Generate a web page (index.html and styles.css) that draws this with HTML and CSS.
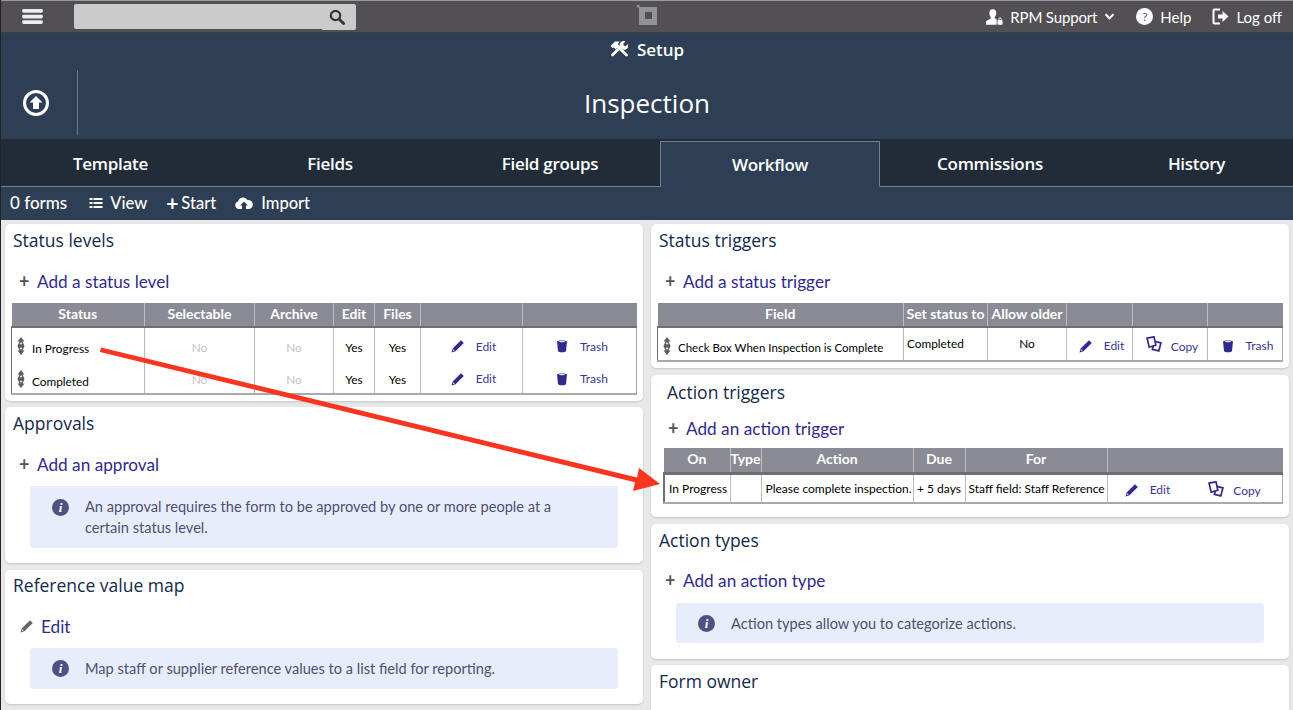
FILE: index.html
```html
<!DOCTYPE html>
<html lang="en">
<head>
    <meta charset="UTF-8">
    <title>Inspection - Workflow</title>
    <link rel="stylesheet" href="styles.css">
</head>
<body>
    <!-- Top bar -->
    <div class="topbar">
        <svg class="menu-icon" viewBox="0 0 22 16"><rect y="0" width="22" height="4" rx="1.5"/><rect y="6" width="22" height="4" rx="1.5"/><rect y="12" width="22" height="4" rx="1.5"/></svg>
        <div class="search">
            <div class="search-input"></div>
            <div class="search-btn">
                <svg viewBox="0 0 16 16"><circle cx="6.5" cy="6.5" r="4.7" fill="none" stroke="#333" stroke-width="2.2"/><path d="M10 10l4.6 4.6" stroke="#333" stroke-width="2.8" stroke-linecap="round"/></svg>
            </div>
        </div>
        <svg class="logo" viewBox="0 0 20 20"><rect x="2" y="2" width="18" height="18" fill="#939296"/><rect x="0" y="0" width="2.500" height="2.500" fill="#939296"/><rect x="8" y="7" width="7" height="7" fill="#4f4e52"/></svg>
        <div class="top-links">
            <a class="top-link link-user">
                <svg class="ic-user" viewBox="0 0 20 18"><path d="M8 0c3 0 4 2 4 4.500 0 2-1 3.500-1.800 4.500v1.500c1 .4 1.800.8 2.300 1.100V18H0v-3c0-2 3.500-3 5.500-4V9C4.700 8 4 6.500 4 4.500 4 2 5 0 8 0z" fill="#fff"/><rect x="13.500" y="12.500" width="6" height="5.500" rx="1" fill="#fff"/><path d="M15 13v-1.500a1.500 1.500 0 013 0V13" fill="none" stroke="#fff" stroke-width="1"/></svg>
                RPM Support
                <svg class="ic-chev" viewBox="0 0 12 8"><path d="M1.500 1.500L6 6l4.500-4.500" fill="none" stroke="#fff" stroke-width="2.400"/></svg>
            </a>
            <a class="top-link">
                <span class="ic-help">?</span>
                Help
            </a>
            <a class="top-link">
                <svg class="ic-logoff" viewBox="0 0 17 17"><path d="M8 1.500H2.500a1 1 0 00-1 1v12a1 1 0 001 1H8" fill="none" stroke="#fff" stroke-width="2"/><path d="M6 6.500h4.500V3l6 5.500-6 5.500v-3.500H6z" fill="#fff"/></svg>
                Log off
            </a>
        </div>
    </div>

    <!-- Header -->
    <header class="header">
        <div class="setup">
            <svg viewBox="0 0 18 16"><path d="M6 4l10.500 10" stroke="#fff" stroke-width="2.800" stroke-linecap="round"/><path d="M0.500 5L5 0.500h4.500L8 3l1 2-3.500 3.500-1.500-2-1.500 0.500z" fill="#fff"/><path d="M2.500 14l8.500-8.500" stroke="#fff" stroke-width="2.800" stroke-linecap="round"/><path d="M10.500 6.500a4 4 0 015-6l-2.300 2.300.6 1.800 1.800.6L17.900 2.900a4 4 0 01-5.400 5.400z" fill="#fff"/></svg>
            Setup
        </div>
        <div class="title-row">
            <div class="back">
                <svg viewBox="0 0 28 28"><circle cx="14" cy="14" r="11.500" fill="none" stroke="#fff" stroke-width="3"/><path d="M14 7l6.500 6.500H17V20h-6v-6.500H7.500z" fill="#fff"/></svg>
            </div>
            <h1>Inspection</h1>
        </div>
    </header>

    <!-- Tabs -->
    <nav class="tabs">
        <a class="tab">Template</a>
        <a class="tab">Fields</a>
        <a class="tab">Field groups</a>
        <a class="tab active">Workflow</a>
        <a class="tab">Commissions</a>
        <a class="tab">History</a>
    </nav>

    <div class="toolbar">
        <span>0 forms</span>
        <a>
            <svg class="ic-list" viewBox="0 0 13 10"><path d="M0 0h3v2H0zM4 0h9v2H4zM0 4h3v2H0zM4 4h9v2H4zM0 8h3v2H0zM4 8h9v2H4z" fill="#fff"/></svg>
            View
        </a>
        <a><span class="tool-plus">+</span> Start</a>
        <a>
            <svg class="ic-cloud" viewBox="0 0 18 12"><path d="M4 12a3.800 3.800 0 01-.8-7.500A5 5 0 0112.500 3a4.500 4.500 0 011.500 9h-3V8.500h2L9 4.500l-4 4h2V12z" fill="#fff"/></svg>
            Import
        </a>
    </div>

    <main class="content">
        <div class="col col-left">
            <section class="card card-levels">
                <h2>Status levels</h2>
                <a class="add"><span class="plus">+</span>Add a status level</a>
                <table class="grid levels">
                    <colgroup><col class="c133"><col class="c110"><col class="c79"><col class="c41"><col class="c46"><col class="c102"><col></colgroup>
                    <tr><th>Status</th><th>Selectable</th><th>Archive</th><th>Edit</th><th>Files</th><th></th><th></th></tr>
                    <tr>
                        <td class="name"><svg class="drag" viewBox="0 0 8 18"><use href="#grip"/></svg><span>In Progress</span></td>
                        <td class="off">No</td><td class="off">No</td><td>Yes</td><td>Yes</td>
                        <td class="act"><a><svg class="ic" viewBox="0 0 14 14"><use href="#pencil"/></svg>Edit</a></td>
                        <td class="act"><a><svg class="ic" viewBox="0 0 14 14"><use href="#trash"/></svg>Trash</a></td>
                    </tr>
                    <tr>
                        <td class="name"><svg class="drag" viewBox="0 0 8 18"><use href="#grip"/></svg><span>Completed</span></td>
                        <td class="off">No</td><td class="off">No</td><td>Yes</td><td>Yes</td>
                        <td class="act"><a><svg class="ic" viewBox="0 0 14 14"><use href="#pencil"/></svg>Edit</a></td>
                        <td class="act"><a><svg class="ic" viewBox="0 0 14 14"><use href="#trash"/></svg>Trash</a></td>
                    </tr>
                </table>
            </section>

            <section class="card card-approvals">
                <h2>Approvals</h2>
                <a class="add"><span class="plus">+</span>Add an approval</a>
                <div class="note">
                    <span class="info">i</span>
                    <p>An approval requires the form to be approved by one or more people at a certain status level.</p>
                </div>
            </section>

            <section class="card card-refmap">
                <h2>Reference value map</h2>
                <a class="add"><svg class="ic-grey" viewBox="0 0 14 14"><use href="#pencil"/></svg>Edit</a>
                <div class="note">
                    <span class="info">i</span>
                    <p>Map staff or supplier reference values to a list field for reporting.</p>
                </div>
            </section>
        </div>

        <div class="col col-right">
            <section class="card card-striggers">
                <h2>Status triggers</h2>
                <a class="add"><span class="plus">+</span>Add a status trigger</a>
                <table class="grid triggers">
                    <colgroup><col class="c246"><col class="c84"><col class="c79"><col class="c66"><col class="c75"><col></colgroup>
                    <tr><th>Field</th><th>Set status to</th><th>Allow older</th><th></th><th></th><th></th></tr>
                    <tr>
                        <td class="name"><svg class="drag" viewBox="0 0 8 18"><use href="#grip"/></svg><span>Check Box When Inspection is Complete</span></td>
                        <td class="left raised">Completed</td>
                        <td class="raised">No</td>
                        <td class="act"><a><svg class="ic" viewBox="0 0 14 14"><use href="#pencil"/></svg>Edit</a></td>
                        <td class="act"><a><svg class="ic ic-copy" viewBox="0 0 15 15"><use href="#copy"/></svg>Copy</a></td>
                        <td class="act"><a><svg class="ic" viewBox="0 0 14 14"><use href="#trash"/></svg>Trash</a></td>
                    </tr>
                </table>
            </section>

            <section class="card card-atriggers">
                <h2>Action triggers</h2>
                <a class="add"><span class="plus">+</span>Add an action trigger</a>
                <table class="grid actions">
                    <colgroup><col class="c66"><col class="c31"><col class="c152"><col class="c52"><col class="c142"><col></colgroup>
                    <tr><th>On</th><th>Type</th><th>Action</th><th>Due</th><th>For</th><th></th></tr>
                    <tr>
                        <td class="left">In Progress</td>
                        <td></td>
                        <td class="left">Please complete inspection.</td>
                        <td>+ 5 days</td>
                        <td class="left">Staff field: Staff Reference</td>
                        <td class="act pair">
                            <a><svg class="ic" viewBox="0 0 14 14"><use href="#pencil"/></svg>Edit</a>
                            <a><svg class="ic ic-copy" viewBox="0 0 15 15"><use href="#copy"/></svg>Copy</a>
                        </td>
                    </tr>
                </table>
            </section>

            <section class="card card-types">
                <h2>Action types</h2>
                <a class="add"><span class="plus">+</span>Add an action type</a>
                <div class="note">
                    <span class="info">i</span>
                    <p>Action types allow you to categorize actions.</p>
                </div>
            </section>

            <section class="card card-owner">
                <h2>Form owner</h2>
            </section>
        </div>
    </main>

    <!-- Annotation drawn on the screenshot -->
    <svg class="annotation" viewBox="0 0 1293 710">
        <path d="M101 347.500L637 477.500 639 468 660 484 633 491 635 482.300 100 352z" fill="#f9341f"/>
    </svg>

    <svg class="defs" width="0" height="0">
        <defs>
            <symbol id="grip" viewBox="0 0 8 18"><path d="M4 0l3.500 4.500h-2L7.500 9l-2 4.500h2L4 18 .5 13.500h2L.5 9l2-4.500h-2z" fill="#5d5d63"/><circle cx="4" cy="6.500" r=".9" fill="#fff"/><circle cx="4" cy="11.500" r=".9" fill="#fff"/></symbol>
            <symbol id="pencil" viewBox="0 0 14 14"><path d="M10 1.200l2.800 2.800L4.500 12.300 0.500 13.500 1.700 9.500z" fill="currentColor"/><circle cx="2.700" cy="11.300" r=".7" fill="#fff"/></symbol>
            <symbol id="trash" viewBox="0 0 14 14"><path d="M2 2.500C2 1 12 1 12 2.500L11 12c-.2 1.800-7.800 1.800-8 0z" fill="currentColor"/><ellipse cx="7" cy="2.600" rx="3.300" ry=".7" fill="#fff"/></symbol>
            <symbol id="copy" viewBox="0 0 15 15"><path d="M8 5l6 1.500-2 7.500-6-1.500z" fill="#fff" stroke="currentColor" stroke-width="1.600"/><path d="M1 2l6.500-1.200 1.700 7.700L3 10.500z" fill="#fff" stroke="currentColor" stroke-width="1.600"/></symbol>
        </defs>
    </svg>
</body>
</html>
```

FILE: styles.css
```css
html, body {
    margin: 0;
    padding: 0;
    height: 710px;
    overflow: hidden;
}

body {
    position: relative;
    background: #e8e8e8;
    font-family: 'Lato', sans-serif;
    color: #000;
    border-left: 1px solid #222;
    box-sizing: border-box;
}

/* Sliver of the window behind, left in the screenshot */
body::before {
    content: "";
    position: absolute;
    left: -1px;
    top: 400px;
    width: 1px;
    height: 142px;
    background: #b5652a;
}

a {
    color: inherit;
    text-decoration: none;
}

/* Top bar */
.topbar {
    height: 33px;
    box-sizing: border-box;
    border-top: 1px solid #9a9a9c;
    border-bottom: 1px solid #3f3f42;
    background: #524f55;
    display: flex;
    align-items: center;
    position: relative;
    color: #fff;
}

.menu-icon {
    width: 21px;
    height: 15px;
    margin-left: 21px;
    fill: #eee;
}

.search {
    width: 282px;
    height: 26px;
    margin-left: 31px;
    display: flex;
    align-items: flex-start;
}

.search-input {
    flex: 1;
    height: 25px;
    background: #cbcbcb;
    border-radius: 2px 0 0 2px;
}

.search-btn {
    width: 34px;
    height: 26px;
    padding-right: 4px;
    box-sizing: border-box;
    background: #cbcbcb;
    border-radius: 0 2px 2px 0;
    display: flex;
    justify-content: center;
    align-items: center;
}

.search-btn svg {
    width: 16px;
    height: 16px;
}

.logo {
    width: 20px;
    height: 20px;
    position: absolute;
    left: 636px;
    top: 4px;
}

.top-links {
    margin-left: auto;
    display: flex;
    align-items: center;
    gap: 21px;
    padding-right: 11px;
}

.top-link {
    display: flex;
    align-items: center;
    font-size: 15px;
}

.link-user {
    letter-spacing: -0.15px;
}

.ic-user {
    width: 17px;
    height: 16px;
    margin-right: 7px;
}

.ic-chev {
    width: 11px;
    height: 7px;
    margin-left: 7px;
}

.ic-help {
    width: 17px;
    height: 17px;
    border-radius: 50%;
    background: #fff;
    color: #55535a;
    font-size: 12px;
    line-height: 17px;
    text-align: center;
    margin-right: 7px;
}

.ic-logoff {
    width: 17px;
    height: 17px;
    margin-right: 7px;
}

/* Header */
.header {
    height: 106px;
    background: #2e3e54;
    color: #fff;
}

.setup {
    height: 37px;
    display: flex;
    justify-content: center;
    align-items: center;
    gap: 9px;
    font-family: 'Open Sans', sans-serif;
    font-size: 17px;
    font-weight: 600;
    padding-bottom: 5px;
    box-sizing: border-box;
}

.setup svg {
    width: 18px;
    height: 16px;
}

.title-row {
    display: flex;
    height: 65px;
}

.back {
    width: 76px;
    border-right: 1px solid #6d7889;
    display: flex;
    align-items: center;
    justify-content: center;
}

.back svg {
    width: 28px;
    height: 28px;
    margin-left: -7px;
}

h1 {
    flex: 1;
    margin: 0 77px 0 0;
    text-align: center;
    font-family: 'Open Sans', sans-serif;
    font-size: 26px;
    font-weight: 500;
    line-height: 66px;
}

/* Tabs */
.tabs {
    height: 48px;
    box-sizing: border-box;
    background: #212c38;
    border-bottom: 1px solid #75808d;
    display: flex;
    padding-top: 2px;
}

.tab {
    flex: none;
    width: 220px;
    text-align: center;
    color: #fff;
    font-family: 'Open Sans', sans-serif;
    font-size: 17px;
    font-weight: 600;
    letter-spacing: -0.3px;
    line-height: 46px;
    box-sizing: border-box;
}

.tab:first-child {
    width: 219px;
}

.tab:last-child {
    flex: 1;
}

.tab.active {
    background: #2e3e54;
    border: 1px solid #75808d;
    border-bottom: 1px solid #2e3e54;
    height: 46px;
    line-height: 46px;
}

.toolbar {
    height: 33px;
    background: #2e3e54;
    color: #fff;
    font-size: 17px;
    font-weight: 500;
    display: flex;
    align-items: center;
    gap: 19px;
    padding: 0 0 2px 9px;
    box-sizing: border-box;
}

.toolbar a {
    display: flex;
    align-items: center;
    font-size: 16.500px;
}

.toolbar span:first-child {
    margin-right: 3px;
}

.ic-list {
    width: 14px;
    height: 10px;
    margin-right: 7px;
}

.tool-plus {
    font-size: 21px;
    line-height: 20px;
    margin-right: 9px;
    font-weight: 700;
}

.ic-cloud {
    width: 18px;
    height: 12px;
    margin-right: 8px;
}

/* Cards */
.content {
    display: grid;
    grid-template-columns: 638px 638px;
    column-gap: 8px;
    padding: 4px 0 0 4px;
}

.col {
    display: flex;
    flex-direction: column;
    gap: 6px;
}

.col-right {
    gap: 7px;
}

.card {
    background: #fff;
    border-radius: 5px;
    box-shadow: 0 1px 2px rgba(0, 0, 0, 0.15);
    padding: 5px 6px 0;
    box-sizing: border-box;
}

.card-levels { height: 177px; }
.card-approvals { height: 156px; }
.card-refmap { height: 134px; margin-top: 1px; padding-top: 4px; }
.card-striggers { height: 144px; }
.card-atriggers { height: 142px; padding-top: 6px; }
.card-types { height: 135px; }
.card-owner { height: 60px; margin-top: -1px; }

h2 {
    margin: 0 0 0 2px;
    color: #13294b;
    font-family: 'Open Sans', sans-serif;
    font-size: 17.500px;
    font-weight: 400;
    line-height: 23px;
}

.add {
    display: flex;
    align-items: center;
    height: 24px;
    margin: 17px 0 10px 8px;
    color: #312a8c;
    font-size: 17.200px;
}

.plus {
    width: 18px;
    color: #555;
    font-size: 18px;
    font-weight: 700;
    line-height: 20px;
}

.ic-grey {
    width: 14px;
    height: 14px;
    margin: 0 7px 0 0;
    color: #666;
}

/* Tables */
.grid {
    border-collapse: collapse;
    table-layout: fixed;
    width: 626px;
    font-size: 11.800px;
    text-align: center;
}

.grid th {
    box-sizing: border-box;
    background: #8a8b95;
    color: #fff;
    font-size: 14px;
    font-weight: 700;
    height: 24px;
    padding: 0 0 2px;
    border-left: 1px solid #bdbdc2;
    border-bottom: 2px solid #6e6e74;
    white-space: nowrap;
}

.grid th:first-child {
    border-left: 0;
}

.grid td {
    box-sizing: border-box;
    height: 33px;
    padding: 0;
    border-left: 1px solid #bcbcbc;
    white-space: nowrap;
}

.grid td:first-child {
    border-left: 1px solid #6e6e74;
}

.grid tr:last-child td {
    border-bottom: 2px solid #aaa;
}

.grid td:last-child {
    border-right: 1px solid #aaa;
}

.name {
    text-align: left;
}

.drag {
    width: 8px;
    height: 18px;
    margin: 0 7px 0 5px;
    vertical-align: middle;
}

.off {
    color: #c4c4c4;
}

.grid .left {
    text-align: left;
    padding-left: 3px;
}

.grid .raised {
    padding-bottom: 2px;
}

.grid .act {
    padding: 4px 0 0 4px;
    font-size: 12px;
}

.act a {
    color: #3a3592;
    display: inline-flex;
    align-items: center;
}

.ic {
    width: 14px;
    height: 14px;
    margin-right: 11px;
    color: #312a8c;
}

.ic-copy {
    width: 16px;
    height: 16px;
    margin: -4px 9px 0 0;
}

/* Status levels rows */
.levels td {
    height: 33.500px;
    padding-top: 6px;
}

.levels .name {
    padding-top: 5px;
}

.levels .name span {
    vertical-align: -4px;
}

.grid.levels .act {
    padding-top: 6px;
}

/* Status triggers row */
.triggers td {
    height: 34px;
}

.triggers .name {
    padding-top: 4px;
    font-size: 11.500px;
}

.triggers .name span {
    vertical-align: -3px;
}

.grid.triggers .act {
    padding-top: 6px;
}

/* Action triggers */
.actions {
    width: 620px;
    margin-left: 6px;
    font-size: 12px;
}

.card-atriggers h2 {
    margin-left: 10px;
}

.card-atriggers .add {
    margin: 12px 0 8px 11px;
}

.actions th {
    height: 25px;
    border-bottom-width: 3px;
}

.actions td {
    height: 30px;
}

.actions td:first-child {
    border-left: 2px solid #6e6e74;
}

.grid.actions td:first-child,
.grid.actions td:nth-child(3) {
    padding-left: 4px;
}

.grid .pair {
    padding: 5px 4px 0 0;
}

.pair a + a {
    margin-left: 35px;
}

.c133 { width: 133px; }
.c110 { width: 110px; }
.c79 { width: 79px; }
.c41 { width: 41px; }
.c46 { width: 46px; }
.c102 { width: 102px; }
.c246 { width: 246px; }
.c84 { width: 84px; }
.c66 { width: 66px; }
.c75 { width: 75px; }
.c31 { width: 31px; }
.c152 { width: 152px; }
.c52 { width: 52px; }
.c142 { width: 142px; }

/* Info note */
.note {
    margin: 0 19px;
    padding: 10px 22px;
    background: #e8edfb;
    border-radius: 3px;
    display: flex;
    align-items: center;
    color: #4f4f72;
    font-size: 14.600px;
    line-height: 21px;
}

.note p {
    margin: 0 0 0 16px;
    max-width: 490px;
}

.info {
    flex: none;
    width: 17px;
    height: 17px;
    border-radius: 50%;
    background: #524f85;
    color: #fff;
    font-family: 'Liberation Serif', serif;
    font-size: 13px;
    font-style: italic;
    font-weight: 700;
    line-height: 17px;
    text-align: center;
}

.card-approvals .info {
    margin-bottom: 20px;
}

.card-refmap .add {
    margin-left: 9px;
}

.card-types .add {
    margin: 16px 0 11px 8px;
}

.card-types .note {
    padding: 9.500px 22px;
}

/* Overlay */
.annotation {
    position: absolute;
    left: -1px;
    top: 0;
    width: 1293px;
    height: 710px;
    pointer-events: none;
}

.defs {
    position: absolute;
}
```
